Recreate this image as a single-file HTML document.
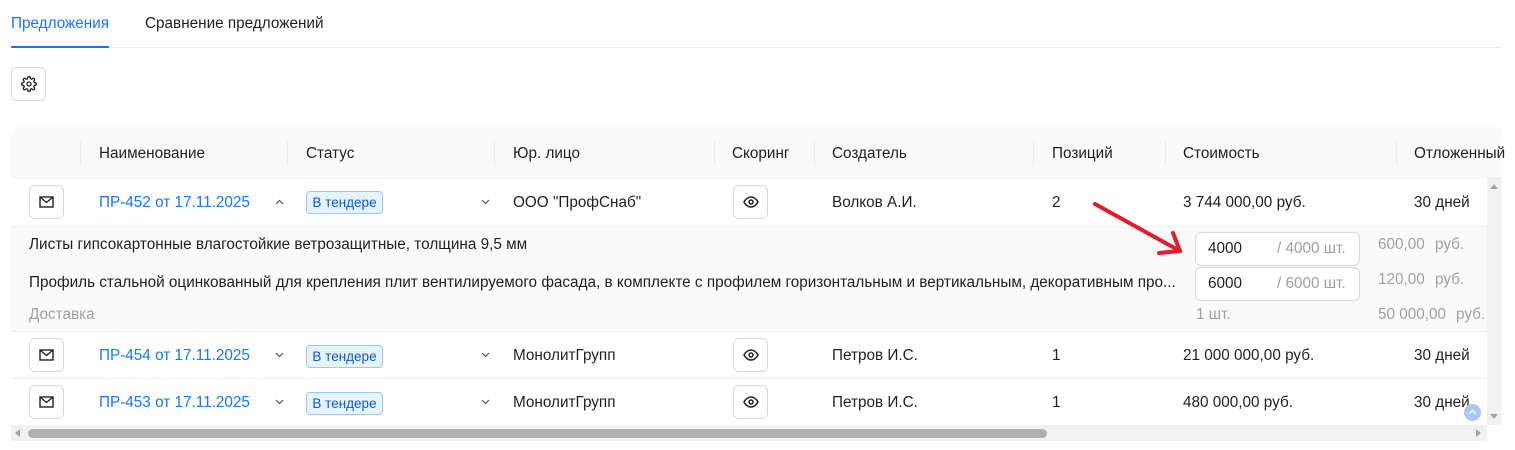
<!DOCTYPE html>
<html><head><meta charset="utf-8"><style>
*{margin:0;padding:0;box-sizing:border-box}
body{width:1515px;height:450px;background:#fff;font-family:"Liberation Sans",sans-serif;font-size:15.3px;color:rgba(0,0,0,.88);position:relative;overflow:hidden}
.a{position:absolute;white-space:nowrap;line-height:20px}
.blue{color:#1677ff}
.gray{color:#a0a0a0}
.btn{position:absolute;width:35px;height:34px;border:1px solid #d9d9d9;border-radius:6px;background:#fff;display:flex;align-items:center;justify-content:center}
.tag{position:absolute;left:306px;width:77px;height:23px;background:#e6f4ff;border:1px solid #91caff;border-radius:4px;color:#0958d9;font-size:13.5px;line-height:21px;text-align:center}
.sep{position:absolute;top:141px;width:1px;height:24px;background:#ececec}
.hl{position:absolute;left:11px;width:1476px;height:1px;background:#f0f0f0}
.inp{position:absolute;left:1195px;width:165px;height:34px;border:1px solid #d9d9d9;border-radius:6px;background:#fff}
.chev{position:absolute}
</style></head><body>
<div class="a blue" style="left:11px;top:14px">Предложения</div>
<div class="a" style="left:145px;top:14px">Сравнение предложений</div>
<div style="position:absolute;left:11px;top:47px;width:1491px;height:1px;background:#f0f0f0"></div>
<div style="position:absolute;left:11px;top:46px;width:98px;height:2px;background:#1677ff"></div>

<div class="btn" style="left:11px;top:67px;width:35px;height:34px"><svg width="16" height="16" viewBox="0 0 24 24" fill="none" stroke="#222" stroke-width="2"><circle cx="12" cy="12" r="3"/><path d="M19.4 15a1.7 1.7 0 0 0 .3 1.8l.1.1a2 2 0 1 1-2.8 2.8l-.1-.1a1.7 1.7 0 0 0-1.8-.3 1.7 1.7 0 0 0-1 1.5V21a2 2 0 1 1-4 0v-.1a1.7 1.7 0 0 0-1.1-1.5 1.7 1.7 0 0 0-1.8.3l-.1.1a2 2 0 1 1-2.8-2.8l.1-.1a1.7 1.7 0 0 0 .3-1.8 1.7 1.7 0 0 0-1.5-1H3a2 2 0 1 1 0-4h.1a1.7 1.7 0 0 0 1.5-1.1 1.7 1.7 0 0 0-.3-1.8l-.1-.1a2 2 0 1 1 2.8-2.8l.1.1a1.7 1.7 0 0 0 1.800.3H9a1.7 1.7 0 0 0 1-1.5V3a2 2 0 1 1 4 0v.1a1.7 1.7 0 0 0 1 1.5 1.7 1.7 0 0 0 1.8-.3l.1-.1a2 2 0 1 1 2.8 2.8l-.1.1a1.7 1.7 0 0 0-.3 1.8V9a1.7 1.7 0 0 0 1.5 1H21a2 2 0 1 1 0 4h-.1a1.7 1.7 0 0 0-1.5 1z"/></svg></div>

<div style="position:absolute;left:11px;top:127px;width:1491px;height:51px;background:#fafafa;border-radius:8px 8px 0 0;border-bottom:1px solid #f0f0f0"></div>
<div class="sep" style="left:80px"></div><div class="sep" style="left:287px"></div><div class="sep" style="left:494px"></div><div class="sep" style="left:714px"></div><div class="sep" style="left:814px"></div><div class="sep" style="left:1033px"></div><div class="sep" style="left:1165px"></div><div class="sep" style="left:1396px"></div>
<div class="a" style="left:99px;top:144px">Наименование</div>
<div class="a" style="left:306px;top:144px">Статус</div>
<div class="a" style="left:513px;top:144px">Юр. лицо</div>
<div class="a" style="left:732px;top:144px">Скоринг</div>
<div class="a" style="left:832px;top:144px">Создатель</div>
<div class="a" style="left:1052px;top:144px">Позиций</div>
<div class="a" style="left:1183px;top:144px">Стоимость</div>
<div class="a" style="left:1414px;top:144px">Отложенный</div>

<div style="position:absolute;left:11px;top:226px;width:1476px;height:105px;background:#fafafa"></div>
<div class="hl" style="top:226px"></div><div class="hl" style="top:331px"></div><div class="hl" style="top:378px"></div>

<div class="btn" style="left:29px;top:185px"><svg width="15" height="12" viewBox="0 0 15 12" fill="none" stroke="#222" stroke-width="1.4"><rect x="1" y="1" width="13" height="10"/><path d="M1 1l6.5 5.5L14 1"/></svg></div>
<div class="a blue" style="left:99px;top:193px">ПР-452 от 17.11.2025</div>
<svg class="chev" style="left:275px;top:199px" width="9" height="6"><path d="M1 5L4.5 1.5L8 5" stroke="#555" stroke-width="1.2" fill="none"/></svg>
<div class="tag" style="top:191px">В тендере</div>
<svg class="chev" style="left:481px;top:199px" width="9" height="6"><path d="M1 1L4.5 4.5L8 1" stroke="#555" stroke-width="1.2" fill="none"/></svg>
<div class="a" style="left:513px;top:193px">ООО "ПрофСнаб"</div>
<div class="btn" style="left:733px;top:185px"><svg width="16" height="12" viewBox="0 0 16 12" fill="none" stroke="#222" stroke-width="1.5"><path d="M1 6c2-3.5 4.5-5 7-5s5 1.5 7 5c-2 3.5-4.5 5-7 5S3 9.5 1 6z"/><circle cx="8" cy="6" r="2"/></svg></div>
<div class="a" style="left:832px;top:193px">Волков А.И.</div>
<div class="a" style="left:1052px;top:193px">2</div>
<div class="a" style="left:1183px;top:193px">3 744 000,00 руб.</div>
<div class="a" style="left:1414px;top:193px">30 дней</div>

<div class="a" style="left:29px;top:235px">Листы гипсокартонные влагостойкие ветрозащитные, толщина 9,5 мм</div>
<div class="a" style="left:29px;top:273px">Профиль стальной оцинкованный для крепления плит вентилируемого фасада, в комплекте с профилем горизонтальным и вертикальным, декоративным про...</div>
<div class="a gray" style="left:29px;top:305px">Доставка</div>
<div class="inp" style="top:232px"></div><div class="inp" style="top:267px"></div>
<div class="a" style="left:1208px;top:239px">4000</div><div class="a gray" style="left:1277px;top:239px">/ 4000 шт.</div>
<div class="a" style="left:1208px;top:274px">6000</div><div class="a gray" style="left:1277px;top:274px">/ 6000 шт.</div>
<div class="a gray" style="left:1196px;top:305px">1 шт.</div>
<div class="a gray" style="left:1378px;top:235px">600,00</div><div class="a gray" style="left:1435px;top:235px">руб.</div>
<div class="a gray" style="left:1378px;top:270px">120,00</div><div class="a gray" style="left:1435px;top:270px">руб.</div>
<div class="a gray" style="left:1378px;top:305px">50 000,00</div><div class="a gray" style="left:1456px;top:305px">руб.</div>

<div class="btn" style="left:29px;top:338px"><svg width="15" height="12" viewBox="0 0 15 12" fill="none" stroke="#222" stroke-width="1.4"><rect x="1" y="1" width="13" height="10"/><path d="M1 1l6.5 5.5L14 1"/></svg></div>
<div class="a blue" style="left:99px;top:346px">ПР-454 от 17.11.2025</div>
<svg class="chev" style="left:275px;top:352px" width="9" height="6"><path d="M1 1L4.5 4.5L8 1" stroke="#555" stroke-width="1.2" fill="none"/></svg>
<div class="tag" style="top:345px">В тендере</div>
<svg class="chev" style="left:481px;top:352px" width="9" height="6"><path d="M1 1L4.5 4.5L8 1" stroke="#555" stroke-width="1.2" fill="none"/></svg>
<div class="a" style="left:513px;top:346px">МонолитГрупп</div>
<div class="btn" style="left:733px;top:338px"><svg width="16" height="12" viewBox="0 0 16 12" fill="none" stroke="#222" stroke-width="1.5"><path d="M1 6c2-3.5 4.5-5 7-5s5 1.5 7 5c-2 3.5-4.5 5-7 5S3 9.5 1 6z"/><circle cx="8" cy="6" r="2"/></svg></div>
<div class="a" style="left:832px;top:346px">Петров И.С.</div>
<div class="a" style="left:1052px;top:346px">1</div>
<div class="a" style="left:1183px;top:346px">21 000 000,00 руб.</div>
<div class="a" style="left:1414px;top:346px">30 дней</div>

<div class="btn" style="left:29px;top:385px"><svg width="15" height="12" viewBox="0 0 15 12" fill="none" stroke="#222" stroke-width="1.4"><rect x="1" y="1" width="13" height="10"/><path d="M1 1l6.5 5.5L14 1"/></svg></div>
<div class="a blue" style="left:99px;top:393px">ПР-453 от 17.11.2025</div>
<svg class="chev" style="left:275px;top:399px" width="9" height="6"><path d="M1 1L4.5 4.5L8 1" stroke="#555" stroke-width="1.2" fill="none"/></svg>
<div class="tag" style="top:392px">В тендере</div>
<svg class="chev" style="left:481px;top:399px" width="9" height="6"><path d="M1 1L4.5 4.5L8 1" stroke="#555" stroke-width="1.2" fill="none"/></svg>
<div class="a" style="left:513px;top:393px">МонолитГрупп</div>
<div class="btn" style="left:733px;top:385px"><svg width="16" height="12" viewBox="0 0 16 12" fill="none" stroke="#222" stroke-width="1.5"><path d="M1 6c2-3.5 4.5-5 7-5s5 1.5 7 5c-2 3.5-4.5 5-7 5S3 9.5 1 6z"/><circle cx="8" cy="6" r="2"/></svg></div>
<div class="a" style="left:832px;top:393px">Петров И.С.</div>
<div class="a" style="left:1052px;top:393px">1</div>
<div class="a" style="left:1183px;top:393px">480 000,00 руб.</div>
<div class="a" style="left:1414px;top:393px">30 дней</div>

<div style="position:absolute;left:1487px;top:178px;width:15px;height:247px;background:#f1f1f1"></div>
<div style="position:absolute;left:1490px;top:184px;width:0;height:0;border:4px solid transparent;border-bottom:5px solid #a3a3a3;border-top:0"></div>
<div style="position:absolute;left:1490px;top:414px;width:0;height:0;border:4px solid transparent;border-top:5px solid #a3a3a3;border-bottom:0"></div>
<div style="position:absolute;left:11px;top:425px;width:1476px;height:16px;background:#f1f1f1"></div>
<div style="position:absolute;left:28px;top:429px;width:1019px;height:9px;background:#b0b0b0;border-radius:5px"></div>
<div style="position:absolute;left:15px;top:429px;border:4px solid transparent;border-right:5px solid #a3a3a3;border-left:0"></div>
<div style="position:absolute;left:1476px;top:429px;border:4px solid transparent;border-left:5px solid #a3a3a3;border-right:0"></div>
<div style="position:absolute;left:1464px;top:404px;width:17px;height:17px;border-radius:50%;background:#a8c8f8"></div>
<svg style="position:absolute;left:1468px;top:409px" width="9" height="6"><path d="M1 5L4.5 1.5L8 5" stroke="#fff" stroke-width="1.2" fill="none"/></svg>

<svg style="position:absolute;left:0;top:0" width="1515" height="450"><g stroke="#e21d2e" stroke-width="4" stroke-linecap="round" fill="none"><path d="M1095 204L1180 251"/><path d="M1180 251L1159 253M1180 251L1173 233"/></g></svg>
</body></html>
